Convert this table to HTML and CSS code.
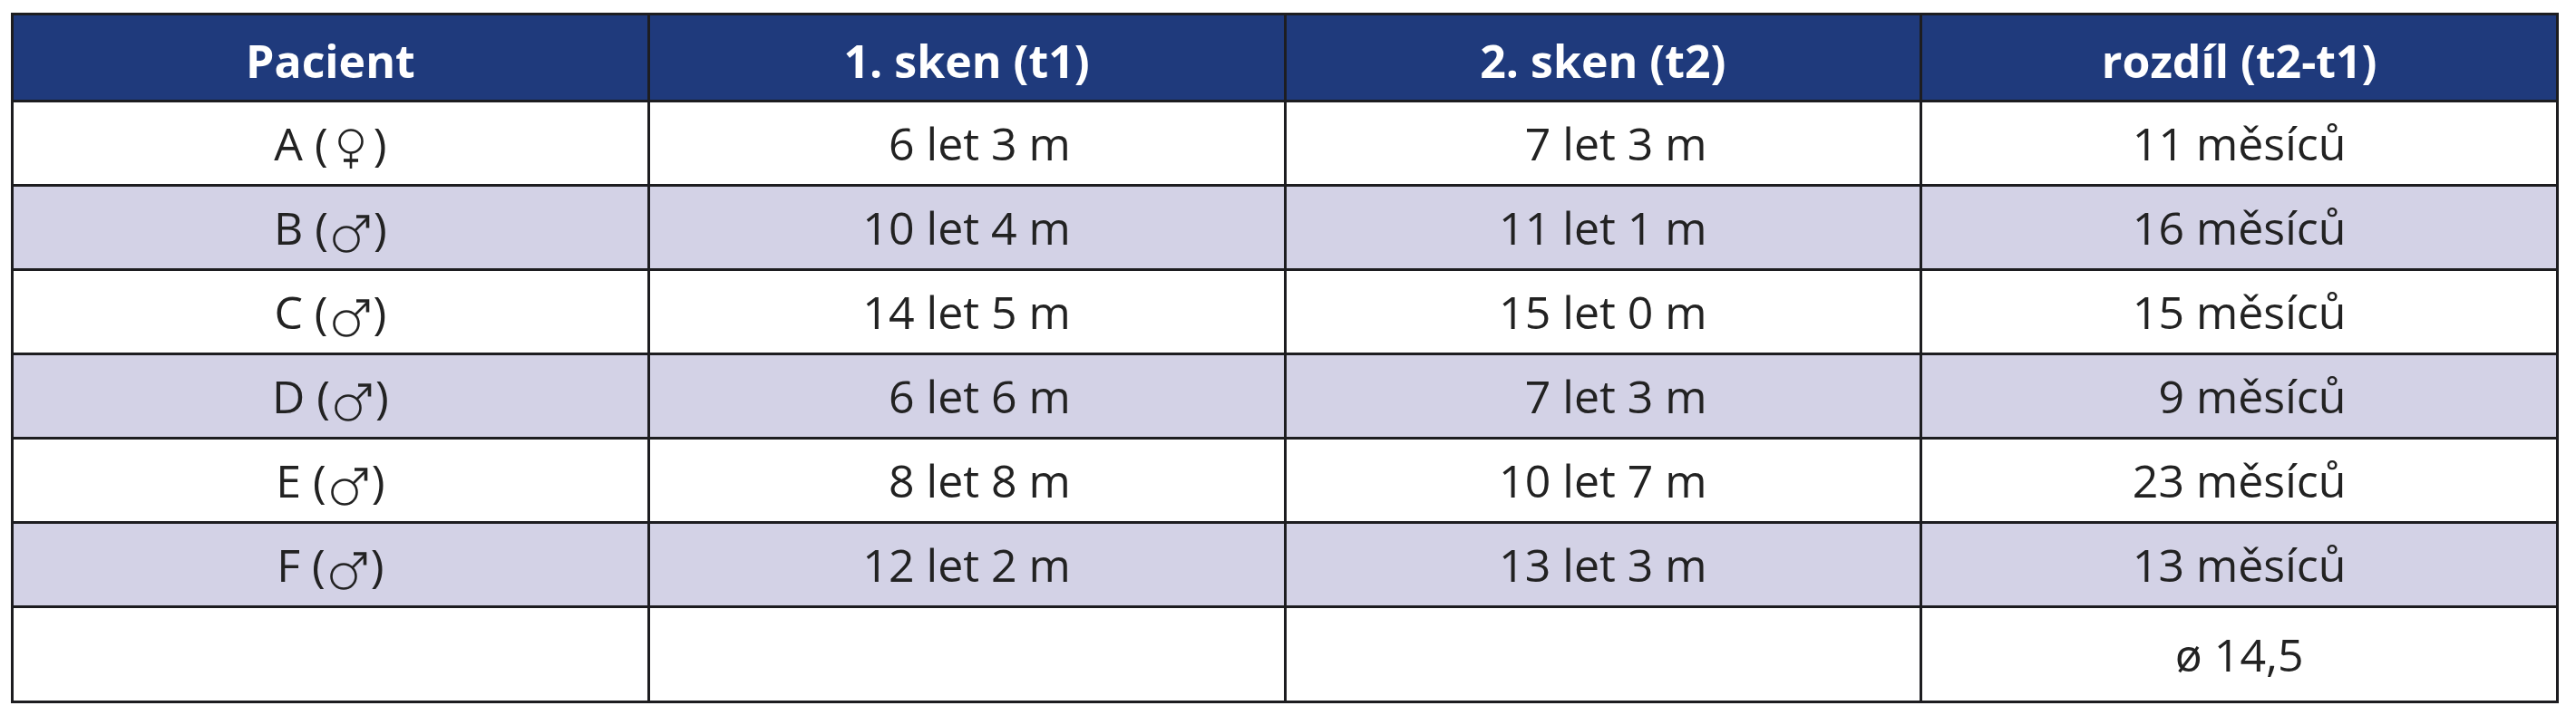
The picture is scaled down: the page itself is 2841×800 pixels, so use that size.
FILE: index.html
```html
<!DOCTYPE html>
<html lang="cs">
<head>
<meta charset="utf-8">
<title>Pacienti – skeny</title>
<link rel="stylesheet" href="styles.css">
</head>
<body>
<div class="wrap">
<table class="data">
  <thead>
    <tr>
      <th>Pacient</th>
      <th>1. sken (t1)</th>
      <th>2. sken (t2)</th>
      <th>rozdíl (t2-t1)</th>
    </tr>
  </thead>
  <tbody>
    <tr>
      <td>A (<svg class="sym" viewBox="0 0 44 46" role="img" aria-label="♀"><circle cx="22" cy="15" r="12.5"/><path d="M22 27.5 V45"/><path class="bar" d="M14 36 H30"/></svg>)</td>
      <td>&#8199;6 let 3 m</td>
      <td>&#8199;7 let 3 m</td>
      <td>11 měsíců</td>
    </tr>
    <tr class="alt">
      <td>B (<svg class="sym" viewBox="0 0 44 46" role="img" aria-label="♂"><circle cx="17" cy="30" r="13.5"/><path d="M26.5 20.5 L40 7"/><path class="bar" d="M28 5 H40.5 V17.5"/></svg>)</td>
      <td>10 let 4 m</td>
      <td>11 let 1 m</td>
      <td>16 měsíců</td>
    </tr>
    <tr>
      <td>C (<svg class="sym" viewBox="0 0 44 46" role="img" aria-label="♂"><circle cx="17" cy="30" r="13.5"/><path d="M26.5 20.5 L40 7"/><path class="bar" d="M28 5 H40.5 V17.5"/></svg>)</td>
      <td>14 let 5 m</td>
      <td>15 let 0 m</td>
      <td>15 měsíců</td>
    </tr>
    <tr class="alt">
      <td>D (<svg class="sym" viewBox="0 0 44 46" role="img" aria-label="♂"><circle cx="17" cy="30" r="13.5"/><path d="M26.5 20.5 L40 7"/><path class="bar" d="M28 5 H40.5 V17.5"/></svg>)</td>
      <td>&#8199;6 let 6 m</td>
      <td>&#8199;7 let 3 m</td>
      <td>&#8199;9 měsíců</td>
    </tr>
    <tr>
      <td>E (<svg class="sym" viewBox="0 0 44 46" role="img" aria-label="♂"><circle cx="17" cy="30" r="13.5"/><path d="M26.5 20.5 L40 7"/><path class="bar" d="M28 5 H40.5 V17.5"/></svg>)</td>
      <td>&#8199;8 let 8 m</td>
      <td>10 let 7 m</td>
      <td>23 měsíců</td>
    </tr>
    <tr class="alt">
      <td>F (<svg class="sym" viewBox="0 0 44 46" role="img" aria-label="♂"><circle cx="17" cy="30" r="13.5"/><path d="M26.5 20.5 L40 7"/><path class="bar" d="M28 5 H40.5 V17.5"/></svg>)</td>
      <td>12 let 2 m</td>
      <td>13 let 3 m</td>
      <td>13 měsíců</td>
    </tr>
    <tr class="summary">
      <td></td>
      <td></td>
      <td></td>
      <td>ø 14,5</td>
    </tr>
  </tbody>
</table>
</div>
</body>
</html>
```
FILE: styles.css
```css
html, body {
  margin: 0;
  padding: 0;
  background: #ffffff;
}

body {
  font-family: "Open Sans", "DejaVu Sans", sans-serif;
}

.wrap {
  padding: 14px 0 0 12px;
}

.data {
  border-collapse: collapse;
  table-layout: fixed;
  width: 2810px;
}

.data th,
.data td {
  border: 3px solid #1d1d20;
  text-align: center;
  vertical-align: middle;
  padding: 0;
  white-space: pre;
}

.data th {
  background: #1f3a7c;
  color: #ffffff;
  font-weight: 700;
  font-size: 50px;
  height: 96px;
  padding-top: 6px;
  box-sizing: border-box;
}

.data td {
  color: #222222;
  font-weight: 400;
  font-size: 50px;
  line-height: 68px;
  height: 93px;
  box-sizing: border-box;
}

.data tr.alt td {
  background: #d3d2e6;
}

.data tr.summary td {
  height: 105px;
}

.sym {
  width: 44px;
  height: 46px;
  margin: 0 3px;
  vertical-align: -10px;
  fill: none;
  stroke: #222222;
  stroke-width: 2.6;
}

.sym .bar {
  stroke-width: 3.6;
}
```
